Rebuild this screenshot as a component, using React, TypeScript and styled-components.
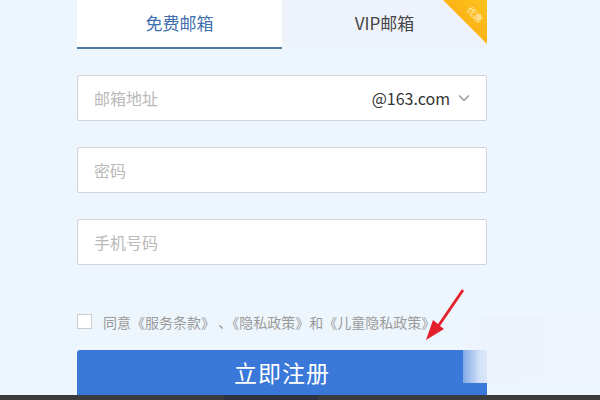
import React from 'react';
import styled, { createGlobalStyle } from 'styled-components';

const GlobalStyle = createGlobalStyle`
  html, body {
    margin: 0;
    padding: 0;
    width: 600px;
    height: 400px;
    overflow: hidden;
    background: #eef6fd;
    font-family: 'Noto Sans CJK SC', 'Noto Sans', sans-serif;
  }
`;

const Page = styled.div`
  position: relative;
  width: 600px;
  height: 400px;
  background: #eef6fd;
  overflow: hidden;
`;

const Form = styled.div`
  width: 410px;
  margin-left: 77px;
  display: flex;
  flex-direction: column;
`;

const Tabs = styled.div`
  display: flex;
  height: 49px;
`;

const Tab = styled.div<{ $active?: boolean }>`
  position: relative;
  flex: 1;
  display: flex;
  align-items: center;
  justify-content: center;
  box-sizing: border-box;
  padding-bottom: 2px;
  background: ${(p) => (p.$active ? '#ffffff' : '#eef3fb')};
  border-bottom: 2px solid ${(p) => (p.$active ? '#4d7a9e' : 'transparent')};
  color: ${(p) => (p.$active ? '#3f6fae' : '#454545')};
  font-size: 17px;
  overflow: hidden;
`;

const Badge = styled.div`
  position: absolute;
  top: 0;
  right: 0;
  width: 44px;
  height: 44px;
  background: linear-gradient(225deg, #ffc21f 0%, #f5a60a 100%);
  clip-path: polygon(0 0, 100% 0, 100% 100%);
`;

const BadgeText = styled.span`
  position: absolute;
  top: 10px;
  right: 3px;
  transform: rotate(45deg);
  color: #fff3d0;
  font-size: 9px;
  line-height: 1;
  white-space: nowrap;
`;

const Field = styled.div`
  margin-top: 26px;
  height: 46px;
  box-sizing: border-box;
  background: #ffffff;
  border: 1px solid #cfd3d8;
  border-radius: 2px;
  display: flex;
  align-items: center;
  padding: 0 16px 0 16px;
`;

const Placeholder = styled.span`
  flex: 1;
  color: #b9b9b9;
  font-size: 16px;
`;

const Domain = styled.span`
  display: flex;
  align-items: center;
  gap: 8px;
  color: #333;
  font-size: 16px;
`;

const AgreeRow = styled.div`
  margin-top: 48px;
  height: 17px;
  display: flex;
  align-items: center;
  gap: 11px;
  font-size: 14px;
  color: #9a9a9a;
  white-space: nowrap;
`;

const Checkbox = styled.span`
  flex: none;
  width: 15px;
  height: 15px;
  box-sizing: border-box;
  border: 1px solid #cccccc;
  background: #fff;
`;

const SubmitButton = styled.button`
  margin-top: 20px;
  height: 50px;
  border: none;
  border-radius: 3px;
  background: #3a78d9;
  color: #ffffff;
  font-family: 'Noto Sans CJK SC', sans-serif;
  font-size: 23px;
  letter-spacing: 1px;
  padding: 0 0 6px 0;
`;

const Haze = styled.div`
  position: absolute;
  left: 463px;
  top: 317px;
  width: 137px;
  height: 66px;
  background: linear-gradient(
    90deg,
    rgba(236, 243, 252, 0.4) 0%,
    rgba(236, 243, 252, 0.85) 12%,
    rgba(236, 243, 252, 1) 26%,
    #eef4fc 100%
  );
`;

const Arrow = styled.svg`
  position: absolute;
  left: 422px;
  top: 286px;
`;

const TaskBar = styled.div`
  position: absolute;
  left: 0;
  bottom: 0;
  width: 600px;
  height: 5px;
  background: #3b3b3d;
  display: flex;
`;

const TaskItem = styled.div`
  margin-left: 224px;
  width: 94px;
  background: #2d3140;
`;

export default function App() {
  return (
    <Page>
      <GlobalStyle />
      <Form>
        <Tabs>
          <Tab $active>免费邮箱</Tab>
          <Tab>
            VIP邮箱
            <Badge>
              <BadgeText>优惠</BadgeText>
            </Badge>
          </Tab>
        </Tabs>
        <Field>
          <Placeholder>邮箱地址</Placeholder>
          <Domain>
            @163.com
            <svg width="12" height="8" viewBox="0 0 12 8">
              <path d="M1 1.5 L6 6.5 L11 1.5" fill="none" stroke="#888" strokeWidth="1.1" />
            </svg>
          </Domain>
        </Field>
        <Field>
          <Placeholder>密码</Placeholder>
        </Field>
        <Field>
          <Placeholder>手机号码</Placeholder>
        </Field>
        <AgreeRow>
          <Checkbox />
          <span>同意《服务条款》 、《隐私政策》和《儿童隐私政策》</span>
        </AgreeRow>
        <SubmitButton>立即注册</SubmitButton>
      </Form>
      <Haze />
      <Arrow width="46" height="58" viewBox="0 0 46 58">
        <path d="M40 3 L16 38 L11 34 L4 54 L22 43 L18 40 L42 5 Z" fill="#e4202a" />
      </Arrow>
      <TaskBar>
        <TaskItem />
      </TaskBar>
    </Page>
  );
}
